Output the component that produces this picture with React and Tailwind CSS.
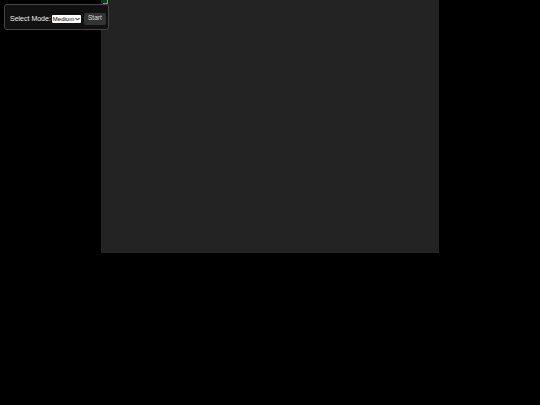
import React from "react";

export default function App() {
  return (
    <div className="relative min-h-[405px] w-full bg-black" style={{ fontFamily: '"Liberation Sans", Arial, sans-serif' }}>
      <div className="flex justify-center">
        <div className="relative h-[253px] w-[338px] bg-[#232323]">
          <div className="absolute left-[2px] top-[-4px] h-[8px] w-[5px] border-r border-b border-[#2ecc40] bg-[#0d3d16]" />
        </div>
      </div>
      <div className="absolute left-[4px] top-[4px] flex h-[26px] w-[105px] items-center rounded-[3px] border border-[#444] bg-[#111] pl-[5px] pr-[4px] pt-[3px]">
        <span className="shrink-0 whitespace-nowrap text-[7px] leading-none text-[#eee]">Select Mode:</span>
        <div className="ml-[1px] mt-[1px] flex h-[8px] w-[29px] shrink-0 items-center justify-between rounded-[1px] bg-white pl-[1px] pr-[1px] text-[6px] leading-none text-black">
          <span className="whitespace-nowrap">Medium</span>
          <svg width="5" height="4" viewBox="0 0 10 8"><path d="M1 2l4 4 4-4" stroke="black" strokeWidth="2" fill="none" /></svg>
        </div>
        <button className="ml-[3px] flex h-[12px] w-[22px] shrink-0 items-center justify-center rounded-[2px] bg-[#333] text-[6.5px] leading-none text-[#ddd]">Start</button>
      </div>
    </div>
  );
}
